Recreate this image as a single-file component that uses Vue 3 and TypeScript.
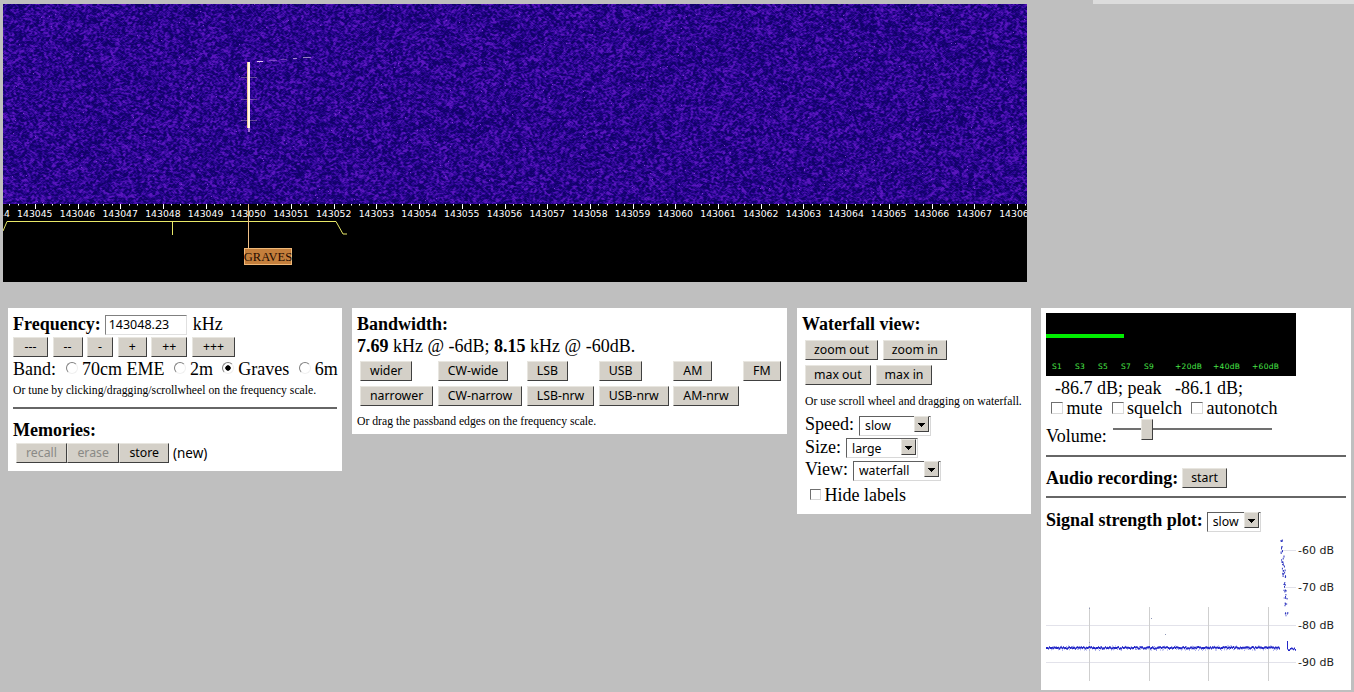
<script setup lang="ts">
import { onMounted, ref } from 'vue'

function rng(seed: number) {
  return () => {
    seed |= 0
    seed = (seed + 0x6d2b79f5) | 0
    let t = Math.imul(seed ^ (seed >>> 15), 1 | seed)
    t = (t + Math.imul(t ^ (t >>> 7), 61 | t)) ^ t
    return ((t ^ (t >>> 14)) >>> 0) / 4294967296
  }
}

const fall = ref<HTMLCanvasElement | null>(null)

const W = 1024
const H = 200

function drawFall(ctx: CanvasRenderingContext2D) {
  const r = rng(7)
  const raw = new Float32Array(W * H)
  for (let i = 0; i < raw.length; i++) raw[i] = r()
  const img = ctx.createImageData(W, H)
  for (let y = 0; y < H; y++) {
    for (let x = 0; x < W; x++) {
      let s = 0
      let n = 0
      for (let dy = -1; dy <= 1; dy++) {
        for (let dx = -1; dx <= 1; dx++) {
          const yy = y + dy
          const xx = x + dx
          if (yy < 0 || yy >= H || xx < 0 || xx >= W) continue
          const w = dx === 0 && dy === 0 ? 5 : dy === 0 ? 2 : 1
          s += raw[yy * W + xx] * w
          n += w
        }
      }
      let t = (s / n - 0.5) * 2.6 + 0.42
      t = Math.max(0, Math.min(1, t))
      const i = (y * W + x) * 4
      img.data[i] = 18 + t * 38 + t * t * 34
      img.data[i + 1] = 2 + t * t * 20
      img.data[i + 2] = 106 + t * 84
      img.data[i + 3] = 255
      if (r() < 0.0012) {
        img.data[i] = 125
        img.data[i + 1] = 55
        img.data[i + 2] = 210
      }
    }
  }
  ctx.putImageData(img, 0, 0)
  // GRAVES echo trace
  ctx.fillStyle = 'rgba(240,200,220,0.35)'
  for (const y of [73, 95, 116]) ctx.fillRect(238, y, 16, 1)
  ctx.fillStyle = '#f0c898'
  ctx.fillRect(244, 58, 3, 66)
  ctx.fillStyle = '#fff8e4'
  ctx.fillRect(245, 58, 2, 66)
  ctx.fillStyle = '#a070d0'
  ctx.fillRect(245, 124, 2, 4)
  ctx.fillStyle = 'rgba(255,230,255,0.85)'
  ctx.fillRect(254, 57, 6, 1)
  ctx.fillStyle = 'rgba(255,230,255,0.55)'
  ctx.fillRect(290, 54, 4, 1)
  ctx.fillRect(300, 53, 8, 1)
  ctx.fillStyle = 'rgba(200,150,230,0.4)'
  ctx.fillRect(266, 56, 8, 1)
  ctx.fillRect(278, 55, 6, 1)
}

onMounted(() => {
  const c = fall.value
  if (c) {
    const ctx = c.getContext('2d')
    if (ctx) drawFall(ctx)
  }
})

const KHZ = 42.7
const X0 = 245.3
const labels: { x: number; t: string }[] = []
for (let f = 143044; f <= 143068; f++) {
  labels.push({ x: X0 + (f - 143050) * KHZ, t: String(f) })
}

function buildTicks() {
  let d = ''
  for (let i = -60; i < 200; i++) {
    const x = Math.round(X0 + (i * KHZ) / 5)
    if (x < 0 || x > W) continue
    if (i % 5 === 0) d += `M${x + 0.5} 0v5`
    else d += `M${x + 0.5} 0v1.5`
  }
  return d
}
const ticks = buildTicks()

const meterLabels = [
  { x: 6, t: 'S1' },
  { x: 29, t: 'S3' },
  { x: 52, t: 'S5' },
  { x: 75, t: 'S7' },
  { x: 98, t: 'S9' },
  { x: 129, t: '+20dB' },
  { x: 167, t: '+40dB' },
  { x: 206, t: '+60dB' },
]

function buildPlot() {
  const r = rng(11)
  let line = ''
  let faint = ''
  let spike = ''
  for (let x = 0; x < 234; x++) {
    const a = 108.9 + (r() - 0.5) * 1.6
    line += `M${x} ${a.toFixed(1)}h1v2h-1z`
    faint += `M${x} ${(109.7 + (r() - 0.5) * 4.4).toFixed(1)}h1v1h-1z`
  }
  for (let x = 241; x < 250; x++) {
    line += `M${x} ${(109.5 + r() * 2).toFixed(1)}h1v1.8h-1z`
  }
  line += 'M241 103h1v7h-1z'
  for (let i = 0; i < 60; i++) {
    const top = 1 + r() * 78
    const x = 233.5 + top * 0.07 + r() * 3
    spike += `M${x.toFixed(1)} ${top.toFixed(1)}h1v${(1 + r()).toFixed(1)}h-1z`
  }
  return { line, faint, spike }
}
const plot = buildPlot()
const plotDots = [
  { x: 43, y: 70 },
  { x: 105, y: 80 },
  { x: 119, y: 96 },
  { x: 43, y: 104 },
]
</script>

<template>
  <div class="page">
    <div class="topstrip"></div>
    <div class="spectrum">
      <canvas ref="fall" class="fall" width="1024" height="200"></canvas>
      <svg class="scale" width="1024" height="78" viewBox="0 0 1024 78">
        <path :d="ticks" stroke="#ffffff" fill="none" />
        <text v-for="l in labels" :key="l.t" :x="l.x" y="12.5" class="scale-label" text-anchor="middle">{{ l.t }}</text>
        <path d="M0 27L4 17.5H333L340 30H344" stroke="#e8e868" fill="none" />
        <path d="M169.5 18V31" stroke="#e8e868" fill="none" />
        <path d="M245.5 0V44" stroke="#f0c088" fill="none" />
        <rect x="241.5" y="44.5" width="47" height="16" fill="#c47f3c" stroke="#f0b878" />
        <text x="265" y="57" class="graves" text-anchor="middle">GRAVES</text>
      </svg>
    </div>

    <div class="panels">
      <section class="panel p-freq">
        <div class="row freq-row">
          <b class="lift">Frequency:</b>
          <input class="freq-input" type="text" value="143048.23" />
          <span class="khz lift">kHz</span>
        </div>
        <div class="row btn-row">
          <button class="triple">---</button>
          <button>--</button>
          <button>-</button>
          <button>+</button>
          <button>++</button>
          <button>+++</button>
        </div>
        <div class="row band-row">
          <span>Band:</span>
          <label class="band"><input type="radio" name="band" />70cm EME</label>
          <label class="band"><input type="radio" name="band" />2m</label>
          <label class="band"><input type="radio" name="band" checked />Graves</label>
          <label class="band"><input type="radio" name="band" />6m</label>
        </div>
        <p class="small">Or tune by clicking/dragging/scrollwheel on the frequency scale.</p>
        <hr />
        <div class="mem-title"><b>Memories:</b></div>
        <div class="row mem-row">
          <button disabled>recall</button>
          <button disabled>erase</button>
          <button>store</button>
          <span class="new">(new)</span>
        </div>
      </section>

      <section class="panel p-bw">
        <div class="bw-title"><b>Bandwidth:</b></div>
        <div class="bw-value"><b>7.69</b> kHz @ -6dB; <b>8.15</b> kHz @ -60dB.</div>
        <div class="bw-grid">
          <button>wider</button>
          <button>CW-wide</button>
          <button>LSB</button>
          <button>USB</button>
          <button>AM</button>
          <button>FM</button>
          <button>narrower</button>
          <button>CW-narrow</button>
          <button>LSB-nrw</button>
          <button>USB-nrw</button>
          <button>AM-nrw</button>
        </div>
        <p class="small bw-note">Or drag the passband edges on the frequency scale.</p>
      </section>

      <section class="panel p-wf">
        <div class="wf-title"><b>Waterfall view:</b></div>
        <div class="row wf-btns">
          <button>zoom out</button>
          <button>zoom in</button>
        </div>
        <div class="row wf-btns">
          <button>max out</button>
          <button>max in</button>
        </div>
        <p class="small wf-note">Or use scroll wheel and dragging on waterfall.</p>
        <div class="wf-field">
          <span>Speed:</span>
          <span class="sel w72"><select><option>slow</option></select></span>
        </div>
        <div class="wf-field">
          <span>Size:</span>
          <span class="sel w72"><select><option>large</option></select></span>
        </div>
        <div class="wf-field">
          <span>View:</span>
          <span class="sel w88"><select><option>waterfall</option></select></span>
        </div>
        <label class="hide"><input type="checkbox" />Hide labels</label>
      </section>

      <section class="panel p-audio">
        <div class="meter">
          <div class="meter-bar"></div>
          <span v-for="m in meterLabels" :key="m.t" class="meter-label" :style="{ left: m.x + 'px' }">{{ m.t }}</span>
        </div>
        <div class="levels">-86.7 dB; peak &nbsp; -86.1 dB;</div>
        <div class="row checks">
          <label><input type="checkbox" />mute</label>
          <label><input type="checkbox" />squelch</label>
          <label><input type="checkbox" />autonotch</label>
        </div>
        <div class="row volume">
          <span>Volume:</span>
          <input class="vol" type="range" min="0" max="100" value="19" />
        </div>
        <hr class="hr-a" />
        <div class="row rec"><b>Audio recording:</b><button>start</button></div>
        <hr class="hr-b" />
        <div class="row sig">
          <b>Signal strength plot:</b>
          <span class="sel w54"><select><option>slow</option></select></span>
        </div>
        <svg class="plot" width="305" height="147" viewBox="0 0 305 147">
          <g stroke="#e2e2ea" fill="none">
            <path d="M236 12.5H250M238 49.5H250M0 87.5H250M0 124.5H250" />
          </g>
          <g stroke="#cfcfcf" fill="none">
            <path d="M43.5 69V143M103.5 69V143M162.5 69V143M222.5 69V143" />
          </g>
          <path :d="plot.faint" fill="#9aa0e8" />
          <path :d="plot.line" fill="#2428c8" />
          <path :d="plot.spike" fill="#3038c0" />
          <rect v-for="(p, i) in plotDots" :key="i" :x="p.x" :y="p.y" width="1" height="1" fill="#9098b8" />
          <text x="252" y="16" class="plot-label">-60 dB</text>
          <text x="252" y="53" class="plot-label">-70 dB</text>
          <text x="252" y="91" class="plot-label">-80 dB</text>
          <text x="252" y="128" class="plot-label">-90 dB</text>
        </svg>
      </section>
    </div>
  </div>
</template>

<style>
html,
body {
  margin: 0;
  background: #bfbfbf;
}
</style>

<style scoped>
.page {
  position: relative;
  width: 1354px;
  height: 692px;
  overflow: hidden;
  background: #bfbfbf;
  font-family: "Liberation Serif", "Times New Roman", serif;
  font-size: 18px;
  color: #000;
}
.topstrip {
  position: absolute;
  top: 0;
  right: 0;
  width: 261px;
  height: 4px;
  background: #dcdcdc;
}
.spectrum {
  margin-left: 3px;
  padding-top: 4px;
  width: 1024px;
}
.fall,
.scale {
  display: block;
}
.scale {
  background: #000;
}
.scale-label {
  fill: #fff;
  font-family: "DejaVu Sans", sans-serif;
  font-size: 9.3px;
}
.graves {
  fill: #1e0a00;
  font-family: "Liberation Serif", serif;
  font-size: 12.5px;
}
.panels {
  display: flex;
  align-items: flex-start;
  gap: 10px;
  margin-top: 26px;
  margin-left: 8px;
}
.panel {
  box-sizing: border-box;
  background: #fff;
  padding: 5px;
  line-height: 20px;
}
.row {
  display: flex;
  align-items: center;
}
button {
  box-sizing: border-box;
  height: 20px;
  padding: 0 9px;
  font-family: "Noto Sans", sans-serif;
  font-size: 12.3px;
  line-height: 16px;
  color: #000;
  background: #d4d0c8;
  border: 1px solid;
  border-color: #e8e6e0 #404040 #404040 #e8e6e0;
  border-radius: 0;
  white-space: nowrap;
}
button:disabled {
  color: #8a8a86;
}
hr {
  height: 2px;
  margin: 0;
  border: 0;
  background: #666;
}
.small {
  margin: 0;
  font-size: 11.7px;
  line-height: 16px;
  white-space: nowrap;
}

.p-freq {
  width: 334px;
  height: 163px;
}
.freq-row {
  height: 23px;
  margin-bottom: 1px;
}
.lift {
  margin-bottom: 2px;
}
.freq-input {
  box-sizing: border-box;
  width: 82px;
  height: 20px;
  margin-left: 4px;
  padding: 0 3px;
  font-family: "Noto Sans", sans-serif;
  font-size: 12.5px;
  border: 1px solid;
  border-color: #808080 #e0e0e0 #e0e0e0 #808080;
  outline: 0;
}
.khz {
  margin-left: 6px;
}
.btn-row {
  gap: 4.6px;
  height: 20px;
}
.btn-row button {
  padding: 0 10px;
}
.btn-row .triple {
  min-width: 35px;
}
.band-row {
  height: 22px;
  margin-top: 1px;
}
.band {
  display: flex;
  align-items: center;
  margin-left: 5.4px;
  white-space: nowrap;
}
.band:first-of-type {
  margin-left: 6px;
}
input[type="radio"] {
  appearance: none;
  box-sizing: border-box;
  width: 12px;
  height: 12px;
  margin: 0 4px 2px 4px;
  border-radius: 50%;
  border: 1px solid;
  border-color: #808080 #f0f0f0 #f0f0f0 #808080;
  background: #fff;
}
input[type="radio"]:checked {
  background: radial-gradient(circle, #000 0 2.4px, #fff 3px);
}
input[type="checkbox"] {
  appearance: none;
  box-sizing: border-box;
  width: 12px;
  height: 12px;
  margin: 0 3.5px 0 0;
  border: 1px solid;
  border-color: #707070 #d8d8d8 #d8d8d8 #707070;
  background: #fff;
}
.p-freq .small {
  margin-top: 3px;
}
.p-freq hr {
  margin-top: 8px;
}
.mem-title {
  margin-top: 11px;
}
.mem-row {
  margin-top: 3px;
  margin-left: 3px;
  gap: 0.5px;
}
.new {
  margin-left: 3.5px;
  font-family: "Noto Sans", sans-serif;
  font-size: 13.5px;
}

.p-bw {
  width: 435px;
  height: 126px;
  padding-top: 6px;
}
.bw-value {
  margin-top: 2px;
}
.bw-grid {
  display: grid;
  grid-template-columns: repeat(6, max-content);
  justify-items: start;
  column-gap: 4.5px;
  row-gap: 5px;
  margin: 5px 0 0 3px;
}
.bw-note {
  margin-top: 8px;
}

.p-wf {
  width: 234px;
  height: 206px;
  padding-top: 6px;
}
.wf-btns {
  gap: 5px;
  margin-top: 5px;
  margin-left: 3px;
}
.wf-btns button {
  padding: 0 8px;
}
.wf-title + .wf-btns {
  margin-top: 6px;
}
.wf-note {
  margin: 9px 0 3px 3px;
}
.wf-field {
  display: flex;
  align-items: center;
  gap: 5px;
  height: 22.5px;
  margin-left: 3px;
}
.sel {
  position: relative;
  display: inline-block;
  height: 20px;
}
.sel select {
  appearance: none;
  box-sizing: border-box;
  width: 100%;
  height: 100%;
  padding: 0 5px;
  font-family: "Noto Sans", sans-serif;
  font-size: 12.3px;
  background: #fff;
  border: 1px solid;
  border-color: #606060 #d8d8d8 #d8d8d8 #606060;
  border-radius: 0;
  outline: 0;
}
.sel::after {
  content: "";
  position: absolute;
  top: 2px;
  right: 2px;
  bottom: 2px;
  width: 15px;
  box-sizing: border-box;
  background:
    linear-gradient(#000, #000) center 6px / 7px 1px no-repeat,
    linear-gradient(#000, #000) center 7px / 5px 1px no-repeat,
    linear-gradient(#000, #000) center 8px / 3px 1px no-repeat,
    linear-gradient(#000, #000) center 9px / 1px 1px no-repeat,
    #d4d0c8;
  border: 1px solid;
  border-color: #e8e6e0 #404040 #404040 #e8e6e0;
}
.w72 {
  width: 72px;
}
.w88 {
  width: 88px;
}
.w54 {
  width: 54px;
}
.hide {
  display: flex;
  align-items: center;
  margin: 4px 0 0 8px;
}
.hide input {
  width: 11px;
  height: 11px;
}

.p-audio {
  width: 310px;
  height: 382px;
}
.meter {
  position: relative;
  width: 250px;
  height: 63px;
  background: #000;
}
.meter-bar {
  position: absolute;
  left: 0;
  top: 21px;
  width: 78px;
  height: 4px;
  background: #00ee00;
}
.meter-label {
  position: absolute;
  top: 49px;
  font-family: "DejaVu Sans", sans-serif;
  font-size: 7.5px;
  line-height: 10px;
  letter-spacing: 0.3px;
  color: #48e848;
}
.levels {
  margin: 2px 0 0 9px;
}
.checks {
  gap: 9px;
  margin: 0 0 0 5px;
}
.checks label {
  display: flex;
  align-items: center;
}
.volume {
  height: 28px;
  margin-top: 4px;
}
.vol {
  appearance: none;
  width: 159px;
  height: 22px;
  margin: -14px 0 0 6px;
  background: linear-gradient(#707070, #707070) center / 100% 2px no-repeat;
}
.vol::-webkit-slider-thumb {
  appearance: none;
  box-sizing: border-box;
  width: 12px;
  height: 21px;
  background: #d4d0c8;
  border: 1px solid;
  border-color: #e8e6e0 #404040 #404040 #e8e6e0;
}
.hr-a {
  margin-top: 5px;
}
.rec {
  gap: 4px;
  margin-top: 11px;
}
.rec button {
  padding: 0 8px;
}
.hr-b {
  margin-top: 8px;
}
.sig {
  gap: 4px;
  margin-top: 12px;
}
.plot {
  display: block;
  margin-top: 8px;
  overflow: visible;
}
.plot-label {
  fill: #222;
  font-family: "DejaVu Sans", sans-serif;
  font-size: 11px;
}
</style>
